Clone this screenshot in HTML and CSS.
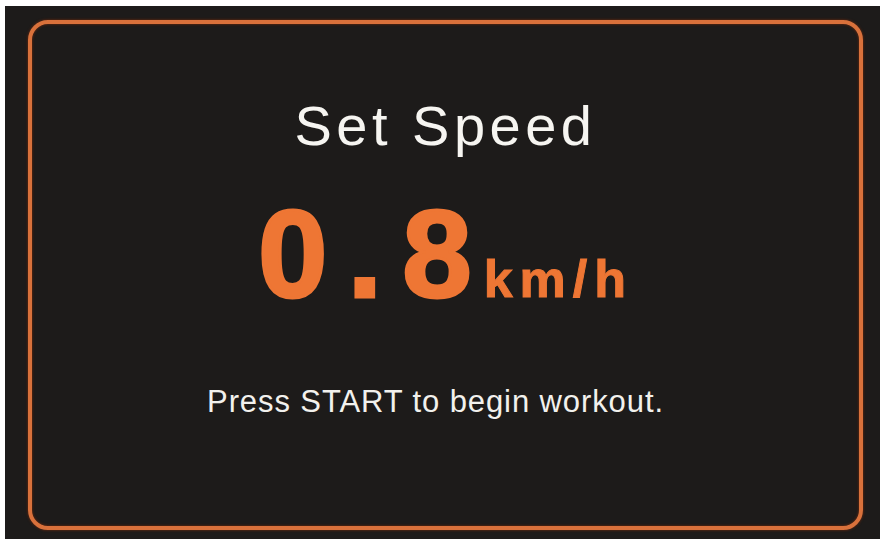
FILE: index.html
```html
<!DOCTYPE html>
<html>
<head>
<meta charset="utf-8">
<link rel="stylesheet" href="styles.css">
</head>
<body>
<div class="panel">
  <div class="frame">
    <div class="title">Set Speed</div>
    <div class="speed">
      <span class="value">0.8</span><span class="unit">km/h</span>
    </div>
    <div class="hint">Press START to begin workout.</div>
  </div>
</div>
</body>
</html>
```

FILE: styles.css
```css
html, body {
  margin: 0;
  padding: 0;
  background: #ffffff;
}
body {
  width: 884px;
  height: 542px;
  overflow: hidden;
  font-family: "Liberation Sans", Arial, sans-serif;
}
.panel {
  margin: 6px 0 0 5px;
  width: 875px;
  height: 533px;
  background: #1d1b1a;
  box-sizing: border-box;
  padding: 14px 17px 9px 23px;
}
.frame {
  box-sizing: border-box;
  height: 510px;
  border: 4px solid #d9713b;
  border-radius: 20px;
  box-shadow: 0 0 2px 1px #4a2212, inset 0 0 2px 1px #4a2212;
  display: flex;
  flex-direction: column;
  align-items: center;
  padding-top: 77px;
}
.title {
  color: #f6f5f1;
  font-size: 56px;
  line-height: 56px;
  letter-spacing: 4.5px;
  margin-top: -3.5px;
}
.speed {
  margin-top: 37.5px;
  display: flex;
  align-items: baseline;
  color: #ee7634;
  font-weight: bold;
}
.value {
  font-size: 125px;
  line-height: 125px;
  letter-spacing: 20px;
  -webkit-text-stroke: 3px #ee7634;
}
.unit {
  font-size: 52px;
  line-height: 52px;
  letter-spacing: 7px;
  margin-left: -8px;
  -webkit-text-stroke: 1px #ee7634;
}
.hint {
  margin-top: 70px;
  color: #f2f1ed;
  font-size: 31px;
  line-height: 31px;
  letter-spacing: 0.9px;
  margin-right: 20px;
}
```
